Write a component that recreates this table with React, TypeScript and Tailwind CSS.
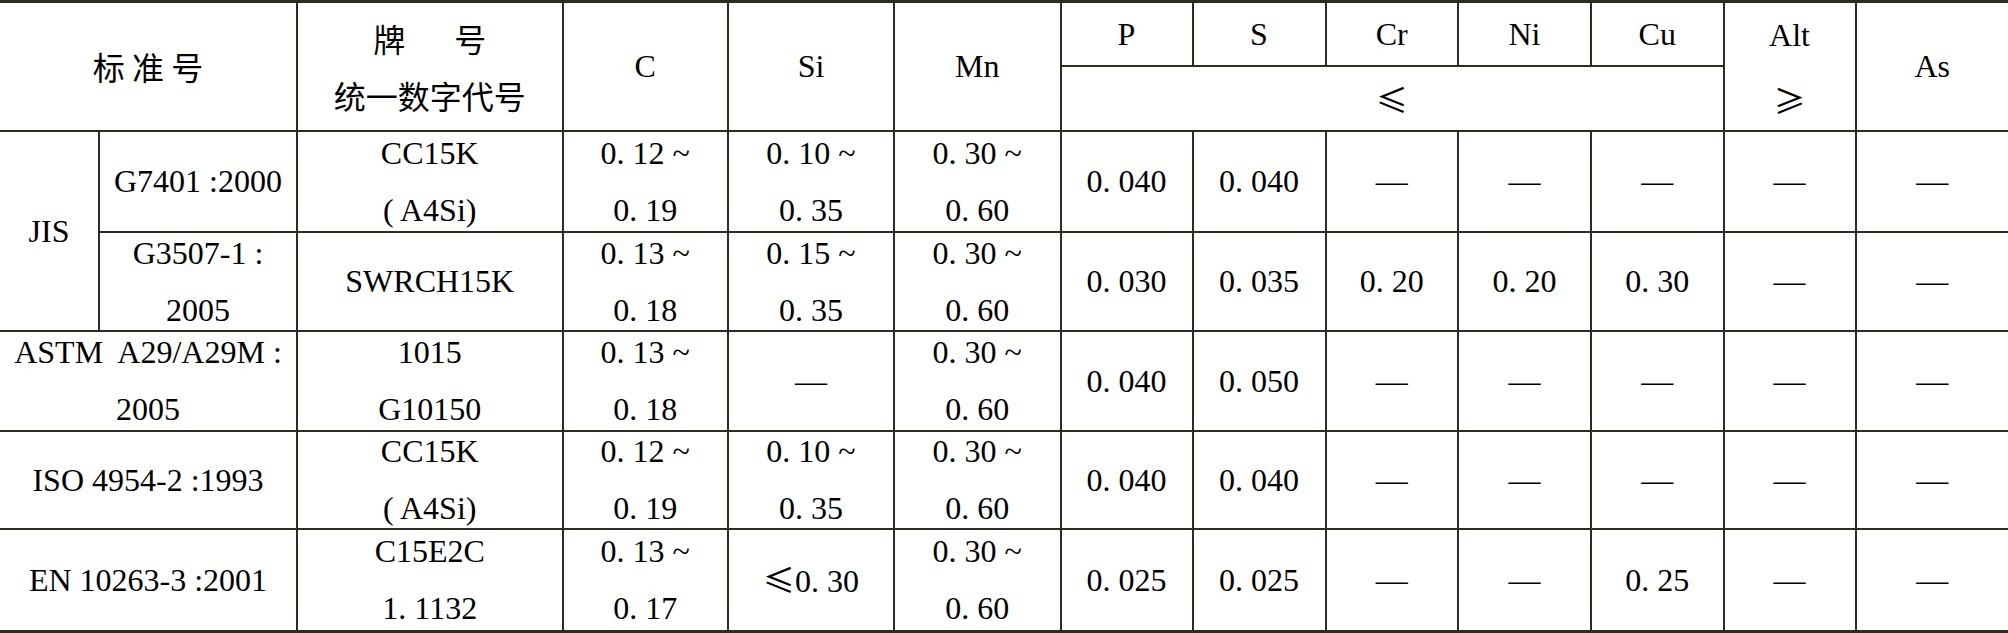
import React from "react";

const ln = "border-[#2a2d20]";
const base = `flex flex-col items-center justify-center text-center leading-[57px] ${ln}`;
const cjk = "font-['Noto_Sans_CJK_SC',sans-serif]";

type Val = React.ReactNode | React.ReactNode[];

function Cell({ v, className }: { v: Val; className: string }) {
  const lines = Array.isArray(v) ? v : [v];
  return (
    <div className={`${base} ${className}`}>
      {lines.map((l, i) => (
        <div key={i} className="whitespace-nowrap">
          {l}
        </div>
      ))}
    </div>
  );
}

const dash = "—";

// body rows: brand, C, Si, Mn, P, S, Cr, Ni, Cu, Alt, As
const body: { rowStart: string; vals: Val[]; last?: boolean }[] = [
  {
    rowStart: "row-start-3",
    vals: [["CC15K", "( A4Si)"], ["0. 12 ~", "0. 19"], ["0. 10 ~", "0. 35"], ["0. 30 ~", "0. 60"], "0. 040", "0. 040", dash, dash, dash, dash, dash],
  },
  {
    rowStart: "row-start-4",
    vals: ["SWRCH15K", ["0. 13 ~", "0. 18"], ["0. 15 ~", "0. 35"], ["0. 30 ~", "0. 60"], "0. 030", "0. 035", "0. 20", "0. 20", "0. 30", dash, dash],
  },
  {
    rowStart: "row-start-5",
    vals: [["1015", "G10150"], ["0. 13 ~", "0. 18"], dash, ["0. 30 ~", "0. 60"], "0. 040", "0. 050", dash, dash, dash, dash, dash],
  },
  {
    rowStart: "row-start-6",
    vals: [["CC15K", "( A4Si)"], ["0. 12 ~", "0. 19"], ["0. 10 ~", "0. 35"], ["0. 30 ~", "0. 60"], "0. 040", "0. 040", dash, dash, dash, dash, dash],
  },
  {
    rowStart: "row-start-7",
    vals: [
      ["C15E2C", "1. 1132"],
      ["0. 13 ~", "0. 17"],
      <>
        <span className={cjk}>≤</span>0. 30
      </>,
      ["0. 30 ~", "0. 60"],
      "0. 025",
      "0. 025",
      dash,
      dash,
      "0. 25",
      dash,
      dash,
    ],
    last: true,
  },
];

const colStarts = [
  "col-start-3",
  "col-start-4",
  "col-start-5",
  "col-start-6",
  "col-start-7",
  "col-start-8",
  "col-start-9",
  "col-start-10",
  "col-start-11",
  "col-start-12",
  "col-start-13",
];

export default function App() {
  return (
    <div className="w-[2008px] h-[633px] bg-white text-black text-[32px] font-['Liberation_Serif','Noto_Sans_CJK_SC',serif]">
      <div className={`border-t-[3px] border-b-[3px] ${ln}`}>
        <div className="grid grid-cols-[100px_198px_265.5px_165.5px_166px_166.5px_132px_133px_132.5px_133px_132.5px_132px_151.5px] grid-rows-[64px_65px_101px_99px_100px_98px_100px]">
          {/* header */}
          <div className={`${base} col-start-1 col-span-2 row-start-1 row-span-2 border-r-2 border-b-2`}>
            <div className={cjk}>标 准 号</div>
          </div>
          <div className={`${base} ${cjk} col-start-3 row-start-1 row-span-2 border-r-2 border-b-2 leading-[55px]`}>
            <div className="flex gap-[49px]">
              <span>牌</span>
              <span>号</span>
            </div>
            <div>统一数字代号</div>
          </div>
          <Cell v="C" className="col-start-4 row-start-1 row-span-2 border-r-2 border-b-2" />
          <Cell v="Si" className="col-start-5 row-start-1 row-span-2 border-r-2 border-b-2" />
          <Cell v="Mn" className="col-start-6 row-start-1 row-span-2 border-r-2 border-b-2" />
          <Cell v="P" className="col-start-7 row-start-1 border-r-2 border-b-2" />
          <Cell v="S" className="col-start-8 row-start-1 border-r-2 border-b-2" />
          <Cell v="Cr" className="col-start-9 row-start-1 border-r-2 border-b-2" />
          <Cell v="Ni" className="col-start-10 row-start-1 border-r-2 border-b-2" />
          <Cell v="Cu" className="col-start-11 row-start-1 border-r-2 border-b-2" />
          <Cell v="≤" className={`${cjk} col-start-7 col-span-5 row-start-2 border-r-2 border-b-2`} />
          <div className={`col-start-12 row-start-1 row-span-2 flex flex-col border-r-2 border-b-2 ${ln}`}>
            <div className="h-[64px] flex items-center justify-center">Alt</div>
            <div className={`flex-1 flex items-center justify-center ${cjk}`}>≥</div>
          </div>
          <Cell v="As" className="col-start-13 row-start-1 row-span-2 border-b-2" />

          {/* standard numbers */}
          <Cell v="JIS" className="col-start-1 row-start-3 row-span-2 border-r-2 border-b-2" />
          <Cell v="G7401 :2000" className="col-start-2 row-start-3 border-r-2 border-b-2" />
          <Cell v={["G3507-1 :", "2005"]} className="col-start-2 row-start-4 border-r-2 border-b-2" />
          <Cell v={["ASTM\u00a0 A29/A29M :", "2005"]} className="col-start-1 col-span-2 row-start-5 border-r-2 border-b-2" />
          <Cell v="ISO 4954-2 :1993" className="col-start-1 col-span-2 row-start-6 border-r-2 border-b-2" />
          <Cell v="EN 10263-3 :2001" className="col-start-1 col-span-2 row-start-7 border-r-2" />

          {/* values */}
          {body.map((r) =>
            r.vals.map((v, i) => (
              <Cell
                key={r.rowStart + i}
                v={v}
                className={`${colStarts[i]} ${r.rowStart} ${i < 10 ? "border-r-2" : ""} ${r.last ? "" : "border-b-2"}`}
              />
            ))
          )}
        </div>
      </div>
    </div>
  );
}
